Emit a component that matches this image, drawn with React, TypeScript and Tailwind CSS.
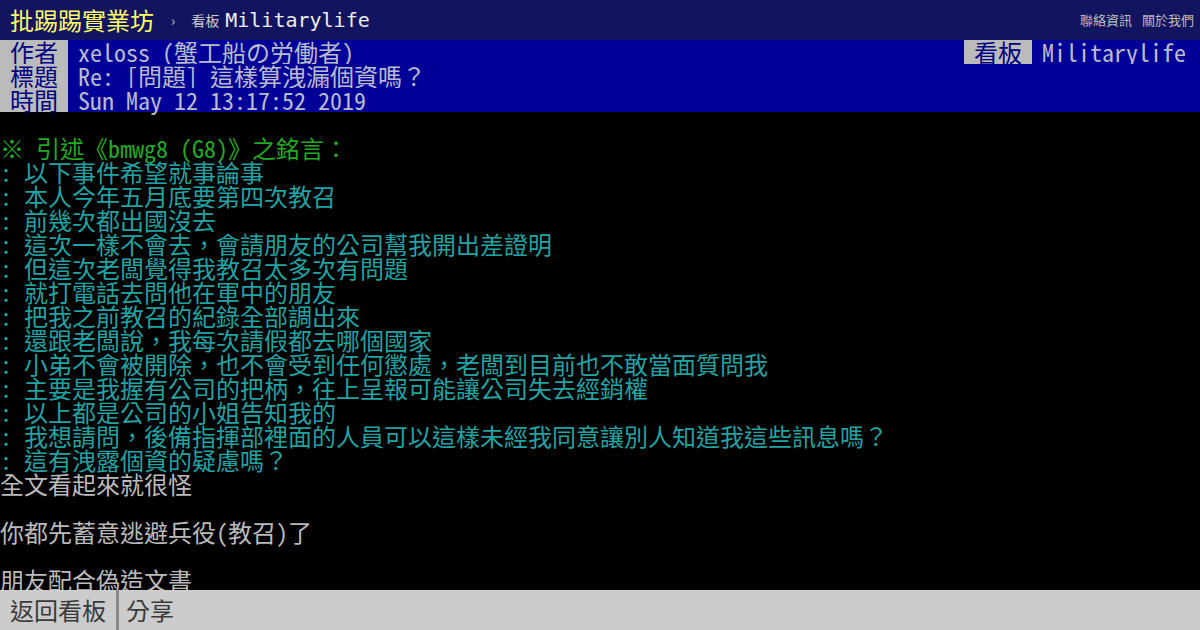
import React from "react";

const mono = "font-['Noto_Sans_Mono_CJK_TC','Noto_Sans_CJK_TC',monospace]";

const quoteLines = [
  "以下事件希望就事論事",
  "本人今年五月底要第四次教召",
  "前幾次都出國沒去",
  "這次一樣不會去，會請朋友的公司幫我開出差證明",
  "但這次老闆覺得我教召太多次有問題",
  "就打電話去問他在軍中的朋友",
  "把我之前教召的紀錄全部調出來",
  "還跟老闆說，我每次請假都去哪個國家",
  "小弟不會被開除，也不會受到任何懲處，老闆到目前也不敢當面質問我",
  "主要是我握有公司的把柄，往上呈報可能讓公司失去經銷權",
  "以上都是公司的小姐告知我的",
  "我想請問，後備指揮部裡面的人員可以這樣未經我同意讓別人知道我這些訊息嗎？",
  "這有洩露個資的疑慮嗎？",
];

const MetaRow = ({ tag, value, right }: { tag: string; value: string; right?: React.ReactNode }) => (
  <div className="flex h-6 items-center bg-[#000099]">
    <span className="w-[68px] h-6 bg-[#bbbbbb] text-[#000080] text-center leading-6">{tag}</span>
    <span className="pl-[10px] text-[#bbbbcc] leading-6 whitespace-pre flex-1">{value}</span>
    {right}
  </div>
);

const App = () => {
  return (
    <div className={`w-[1200px] h-[630px] bg-black flex flex-col overflow-hidden text-[24px] ${mono}`}>
      {/* top bar */}
      <div className="h-10 shrink-0 bg-[#121460] flex items-center px-[10px]">
        <span className="text-[#ffff66] text-[24px] leading-10">批踢踢實業坊</span>
        <span className="text-[#cccccc] text-[14px] ml-[17px]">›</span>
        <span className="text-[#cccccc] text-[14px] ml-[16px]">看板</span>
        <span className="text-[#eeeeee] text-[20px] ml-[6px] font-['DejaVu_Sans_Mono',monospace]">Militarylife</span>
        <div className="flex-1" />
        <span className="text-[#bbbbbb] text-[13px] font-['Noto_Sans_CJK_TC',sans-serif] mr-[10px]">聯絡資訊</span>
        <span className="text-[#bbbbbb] text-[13px] font-['Noto_Sans_CJK_TC',sans-serif] -mr-[4px]">關於我們</span>
      </div>

      {/* article meta */}
      <MetaRow
        tag="作者"
        value="xeloss (蟹工船の労働者)"
        right={
          <div className="flex items-center pr-[14px]">
            <span className="w-[68px] h-6 bg-[#bbbbbb] text-[#000080] text-center leading-6">看板</span>
            <span className="pl-[10px] text-[#bbbbcc] leading-6">Militarylife</span>
          </div>
        }
      />
      <MetaRow tag="標題" value="Re: [問題] 這樣算洩漏個資嗎？" />
      <MetaRow tag="時間" value="Sun May 12 13:17:52 2019" />

      {/* article body */}
      <div className="flex-1 min-h-0 overflow-hidden text-[#bbbbbb] leading-6 whitespace-pre">
        <div className="h-6" />
        <div className="text-[#22aa22]">※ 引述《bmwg8 (G8)》之銘言：</div>
        {quoteLines.map((line, i) => (
          <div key={i} className="text-[#22a3a3]">
            {": " + line}
          </div>
        ))}
        <div>全文看起來就很怪</div>
        <div className="h-6" />
        <div>你都先蓄意逃避兵役(教召)了</div>
        <div className="h-6" />
        <div>朋友配合偽造文書</div>
        <div className="h-6" />
      </div>

      {/* bottom bar */}
      <div className="h-10 shrink-0 bg-[#cccccc] flex items-stretch text-[#3a3a3a]">
        <span className="px-[10px] leading-10">返回看板</span>
        <span className="w-[3px] bg-[#888888]" />
        <span className="pl-[7px] leading-10">分享</span>
      </div>
    </div>
  );
};

export default App;
